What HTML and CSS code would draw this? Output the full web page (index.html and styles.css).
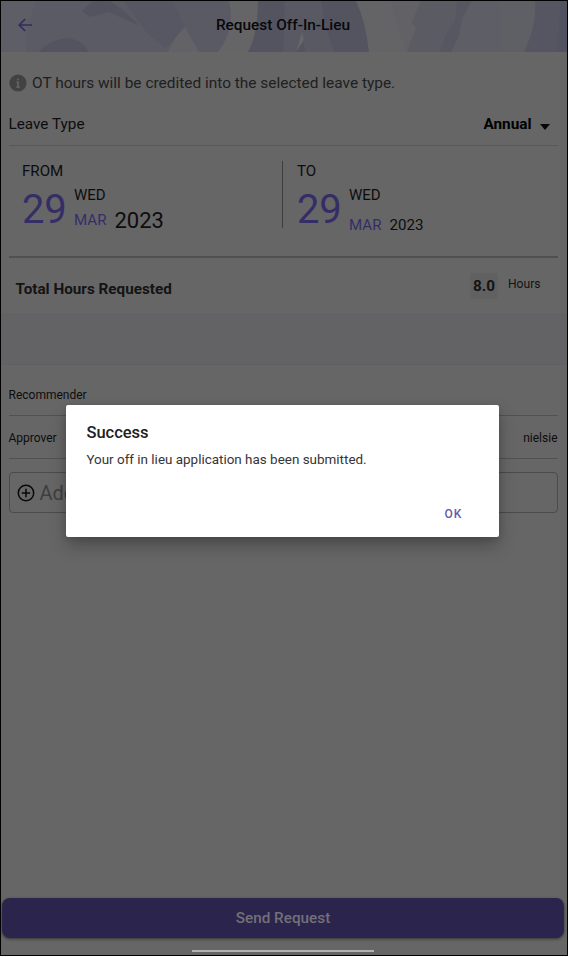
FILE: index.html
```
<!DOCTYPE html>
<html lang="en">
<head>
<meta charset="utf-8">
<title>Request Off-In-Lieu</title>
<link rel="stylesheet" href="styles.css">
</head>
<body>
<div class="screen">
  <header class="topbar">
    <svg class="pattern" viewBox="1 1 566 51" preserveAspectRatio="none" aria-hidden="true">
      <path fill="#5e5e66" d="M1 1H567V52H1z"/>
      <path fill="#5b5b65" d="M36 1H175L186 26Q174 38 168 52H26Q25 30 36 1z"/>
      <path fill="#545461" d="M92 1H110L124 11L140 26L109 12L90 17L82 11z"/>
      <path fill="#575763" d="M137 1H177L185 26Q176 39 165 48L146 32L124 1z"/>
      <path fill="#545461" d="M40 50Q53 39 67 38Q81 39 89 52H39z"/>
      <path fill="#636367" d="M185 27L199 52H168Q174 37 185 27z"/>
      <path fill="#5a5a65" d="M173 1H233Q237 28 218 52H199L185 27z"/>
      <path fill="#656567" d="M229 1H258Q258 34 248 52H218Q236 28 229 1z"/>
      <path fill="#545461" d="M258 1H356Q366 22 369 52H248Q258 34 258 1z"/>
      <path fill="#595964" d="M285 1H321Q325 32 335 52H305L302 30L296 52H283z"/>
      <path fill="#666668" d="M302 31L304 40L296 52z"/>
      <path fill="#646467" d="M356 1H421L412 22L416 28L407 52H369Q366 22 356 1z"/>
      <path fill="#616166" d="M391 1H421L412 22L416 28L407 52Q397 27 391 1z"/>
      <path fill="#5b5b64" d="M421 1H471Q456 26 440 52H407L416 28L412 22z"/>
      <path fill="#575762" d="M457 1H472Q460 18 459 36L451 52H440Q445 32 455 21z"/>
      <path fill="#5f5f66" d="M499 1H538Q537 25 524 52H500Q503 25 499 1z"/>
      <path fill="#565662" d="M535 1H567V52H524Q537 25 535 1z"/>
      <path fill="#525260" d="M561 1H567V52H557z"/>
    </svg>
    <svg class="back" viewBox="0 0 16 16" aria-hidden="true"><path d="M15 8H2.4M8.2 2L2.2 8l6 6"/></svg>
    <h1 class="title">Request Off-In-Lieu</h1>
  </header>

  <main class="content">
    <p class="notice">
      <svg class="info" viewBox="0 0 18 18" aria-hidden="true"><circle cx="9" cy="9" r="8.6"/><path d="M9 4.4v1.9M7.6 8.2H9v4.8M7.4 13.1h3.4"/></svg>
      <span>OT hours will be credited into the selected leave type.</span>
    </p>
    <div class="leave">
      <span>Leave Type</span>
      <span class="picker">Annual <i class="caret"></i></span>
    </div>
    <section class="dates">
      <div class="date from">
        <div class="label">FROM</div>
        <div class="value">
          <span class="day">29</span>
          <div class="rest"><span class="weekday">WED</span>
            <div class="my"><span class="month">MAR</span><span class="year">2023</span></div></div>
        </div>
      </div>
      <div class="date to">
        <div class="label">TO</div>
        <div class="value">
          <span class="day">29</span>
          <div class="rest"><span class="weekday">WED</span>
            <div class="my"><span class="month">MAR</span><span class="year">2023</span></div></div>
        </div>
      </div>
    </section>
    <div class="total">
      <strong>Total Hours Requested</strong>
      <div class="hours"><b>8.0</b><span>Hours</span></div>
    </div>
    <div class="band"></div>
    <div class="row recommender"><span>Recommender</span></div>
    <div class="row"><span>Approver</span><span>nielsie</span></div>
    <div class="add">
      <svg viewBox="0 0 18 18" aria-hidden="true"><circle cx="9" cy="9" r="7.7"/><path d="M9 4.8v8.4M4.8 9h8.4"/></svg>
      <span>Add</span>
    </div>
  </main>

  <footer class="footer">
    <button class="send">Send Request</button>
    <div class="homebar"></div>
  </footer>

  <div class="dialog" role="alertdialog">
    <h2>Success</h2>
    <p>Your off in lieu application has been submitted.</p>
    <button class="ok">OK</button>
  </div>
</div>
</body>
</html>
```
FILE: styles.css
```
* { box-sizing: border-box; }
body { margin: 0; background: #fff; font-family: Roboto, sans-serif; color: #0d0d0d; }
h1, h2, p { margin: 0; }
button { border: 0; font-family: inherit; padding: 0; }
svg { display: block; }
.screen {
  position: relative; width: 568px; height: 956px;
  border: 1px solid #000; background: #666;
  display: flex; flex-direction: column; overflow: hidden;
}
.topbar { height: 51px; flex: none; position: relative; display: flex; align-items: center; justify-content: center; }
.pattern { position: absolute; inset: 0; width: 100%; height: 100%; }
.back { position: absolute; left: 16px; top: 16px; width: 16px; height: 16px; fill: none; stroke: #332c62; stroke-width: 1.7; }
.title { position: relative; font-size: 15.4px; font-weight: 500; line-height: 20px; left: -1px; top: -1.5px; color: #08080a; }
.content { padding: 0 9.5px 0 7.5px; flex: 1; }
.notice { display: flex; align-items: center; gap: 5.5px; height: 30px; margin-top: 16px; font-size: 15.45px; color: #202020; }
.info { width: 18px; height: 18px; fill: #424242; stroke: #6b6b6b; stroke-width: 1.4; }
.info circle { stroke: none; }
.leave { display: flex; justify-content: space-between; height: 48px; padding: 14px 8px 0 0; line-height: 24px; font-size: 15.3px; border-bottom: 1px solid #585858; }
.picker { font-weight: 700; color: #000; display: flex; gap: 8px; }
.caret { border: 5.5px solid transparent; border-top: 6px solid #080808; border-bottom: 0; height: 6px; margin-top: 12px; }
.dates { display: flex; height: 112px; padding: 15px 0 0 13.5px; border-bottom: 2px solid #505050; }
.date { height: 67px; font-size: 15.1px; }
.from { width: 261px; border-right: 1px solid #3d3d3d; }
.to { padding-left: 14px; }
.label { line-height: 20px; }
.value { display: flex; gap: 8px; }
.day { width: 44px; font-size: 40px; line-height: 58px; height: 50px; color: #352e66; font-weight: 400; letter-spacing: -0.2px; }
.weekday { display: block; line-height: 20px; margin-top: 4px; font-size: 15px; }
.my { display: flex; gap: 8px; height: 30px; align-items: center; }
.month { color: #352e66; }
.from .year { font-size: 22px; }
.to .my { margin-top: 5px; }
.total { height: 55px; padding: 0 17px 0 7px; display: flex; justify-content: space-between; align-items: center; font-size: 15.25px; color: #141414; }
.total strong { font-weight: 700; margin-top: 6px; }
.hours { display: flex; gap: 10px; }
.hours b { width: 28px; height: 26px; line-height: 27px; border-radius: 3px; text-align: center; background: #616161; }
.hours span { font-size: 12.1px; line-height: 22px; }
.band { height: 52px; margin: 0 -9.5px 0 -7.5px; background: #636366; border-bottom: 1px solid #606063; }
.row { display: flex; justify-content: space-between; align-items: center; height: 43px; border-bottom: 1px solid #515151; font-size: 12px; }
.row + .row { padding-top: 2px; }
.recommender { height: 51px; padding-top: 9px; }
.add { margin-top: 13px; height: 41px; border: 1px solid #4b4b4b; border-radius: 4px; display: flex; align-items: center; gap: 5px; padding-left: 7px; font-size: 20px; color: #3f3f3f; }
.add svg { width: 18px; height: 18px; fill: none; stroke: #080808; stroke-width: 1.5; }
.footer { height: 57px; padding: 0 3px 0 1px; }
.send { display: block; width: 100%; height: 40px; border-radius: 8px; background: #2b244d; color: #737078; font-size: 15.3px; font-weight: 500; box-shadow: 0 1px 3px #333; }
.homebar { width: 182px; height: 2px; margin: 12px auto 0; background: #b2b2b2; }
.dialog { position: absolute; left: 65.4px; top: 404px; width: 433px; height: 132px; padding: 17px 20px; background: #fff; border-radius: 2px; box-shadow: 0 9px 17px rgba(0,0,0,.25), 0 2px 6px rgba(0,0,0,.12); }
.dialog h2 { font-size: 16.5px; line-height: 21px; font-weight: 500; color: #212121; }
.dialog p { font-size: 13.45px; line-height: 20px; margin-top: 7px; color: #363636; }
.ok { display: block; margin: 35px 17px 0 auto; background: none; color: #6759ad; font-size: 12px; font-weight: 500; line-height: 18px; letter-spacing: 1px; }
```
